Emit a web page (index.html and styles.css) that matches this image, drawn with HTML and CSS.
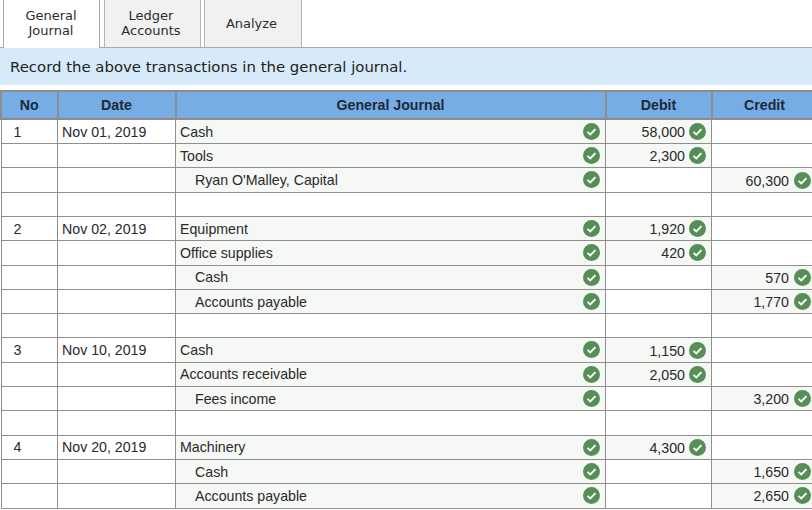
FILE: index.html
```html
<!DOCTYPE html>
<html lang="en">
<head>
<meta charset="utf-8">
<title>General Journal</title>
<link rel="stylesheet" href="styles.css">
</head>
<body>
<svg class="defs" width="0" height="0" aria-hidden="true"><symbol id="ok" viewBox="0 0 18 18"><circle cx="9" cy="9" r="9" fill="#568f56"/><path d="M4.8 9.4l2.9 2.6 5.5-5.6" fill="none" stroke="#fff" stroke-width="2"/></symbol></svg>
<nav class="tabs">
  <div class="tab active">General<br>Journal</div>
  <div class="tab">Ledger<br>Accounts</div>
  <div class="tab">Analyze</div>
</nav>
<p class="prompt">Record the above transactions in the general journal.</p>
<table class="journal">
  <colgroup><col class="c-no"><col class="c-date"><col class="c-acct"><col class="c-num"><col class="c-num2"></colgroup>
  <thead><tr><th>No</th><th>Date</th><th>General Journal</th><th>Debit</th><th>Credit</th></tr></thead>
  <tbody>
    <tr class="filled"><td class="no">1</td><td>Nov 01, 2019</td><td class="acct">Cash<svg class="ok"><use href="#ok"/></svg></td><td class="num">58,000<svg class="ok"><use href="#ok"/></svg></td><td></td></tr>
    <tr class="filled"><td></td><td></td><td class="acct">Tools<svg class="ok"><use href="#ok"/></svg></td><td class="num">2,300<svg class="ok"><use href="#ok"/></svg></td><td></td></tr>
    <tr class="filled cr"><td></td><td></td><td class="acct sub">Ryan O'Malley, Capital<svg class="ok"><use href="#ok"/></svg></td><td></td><td class="num">60,300<svg class="ok"><use href="#ok"/></svg></td></tr>
    <tr><td></td><td></td><td></td><td></td><td></td></tr>
    <tr class="filled"><td class="no">2</td><td>Nov 02, 2019</td><td class="acct">Equipment<svg class="ok"><use href="#ok"/></svg></td><td class="num">1,920<svg class="ok"><use href="#ok"/></svg></td><td></td></tr>
    <tr class="filled"><td></td><td></td><td class="acct">Office supplies<svg class="ok"><use href="#ok"/></svg></td><td class="num">420<svg class="ok"><use href="#ok"/></svg></td><td></td></tr>
    <tr class="filled cr"><td></td><td></td><td class="acct sub">Cash<svg class="ok"><use href="#ok"/></svg></td><td></td><td class="num">570<svg class="ok"><use href="#ok"/></svg></td></tr>
    <tr class="filled cr"><td></td><td></td><td class="acct sub">Accounts payable<svg class="ok"><use href="#ok"/></svg></td><td></td><td class="num">1,770<svg class="ok"><use href="#ok"/></svg></td></tr>
    <tr><td></td><td></td><td></td><td></td><td></td></tr>
    <tr class="filled"><td class="no">3</td><td>Nov 10, 2019</td><td class="acct">Cash<svg class="ok"><use href="#ok"/></svg></td><td class="num">1,150<svg class="ok"><use href="#ok"/></svg></td><td></td></tr>
    <tr class="filled"><td></td><td></td><td class="acct">Accounts receivable<svg class="ok"><use href="#ok"/></svg></td><td class="num">2,050<svg class="ok"><use href="#ok"/></svg></td><td></td></tr>
    <tr class="filled cr"><td></td><td></td><td class="acct sub">Fees income<svg class="ok"><use href="#ok"/></svg></td><td></td><td class="num">3,200<svg class="ok"><use href="#ok"/></svg></td></tr>
    <tr><td></td><td></td><td></td><td></td><td></td></tr>
    <tr class="filled"><td class="no">4</td><td>Nov 20, 2019</td><td class="acct">Machinery<svg class="ok"><use href="#ok"/></svg></td><td class="num">4,300<svg class="ok"><use href="#ok"/></svg></td><td></td></tr>
    <tr class="filled cr"><td></td><td></td><td class="acct sub">Cash<svg class="ok"><use href="#ok"/></svg></td><td></td><td class="num">1,650<svg class="ok"><use href="#ok"/></svg></td></tr>
    <tr class="filled cr"><td></td><td></td><td class="acct sub">Accounts payable<svg class="ok"><use href="#ok"/></svg></td><td></td><td class="num">2,650<svg class="ok"><use href="#ok"/></svg></td></tr>
  </tbody>
</table>
</body>
</html>
```
FILE: styles.css
```css
html, body { margin: 0; padding: 0; background: #fff; }
body { width: 812px; height: 510px; overflow: hidden; color: #222; font-family: "Liberation Sans", Arial, sans-serif; }
.defs { position: absolute; }
.tabs { display: flex; gap: 3px; height: 47px; padding-left: 3px; border-bottom: 1px solid #a9a9a9; font-family: "DejaVu Sans", Verdana, sans-serif; font-size: 13px; line-height: 15px; color: #2b2b2b; }
.tab { box-sizing: border-box; width: 97px; height: 47px; padding: 0 3px 2px 0; display: flex; align-items: center; justify-content: center; text-align: center; background: #f1f1f1; border: 1px solid #b4b4b4; border-top: 0; border-bottom: 0; }
.tab:last-child { width: 98px; padding-bottom: 0; }
.tab.active { width: 97px; height: 48px; margin-right: 1px; padding-right: 1px; background: #fff; position: relative; z-index: 1; border-color: #a9a9a9; }
.prompt { margin: 0; height: 37px; padding-left: 10px; display: flex; align-items: center; background: #d7eaf9; font-family: "DejaVu Sans", Verdana, sans-serif; font-size: 14.9px; color: #222; }
.journal { margin-top: 5.3px; width: 816.5px; table-layout: fixed; border-collapse: collapse; font-size: 14.2px; }
.c-no { width: 56.5px; } .c-date { width: 118px; } .c-acct { width: 430px; } .c-num { width: 106px; } .c-num2 { width: 106px; }
.journal th, .journal td { border: 2px solid #8c8c8c; padding: 0; }
.journal th { height: 26px; background: #78ace4; font-weight: bold; color: #1c2a3a; text-align: center; }
.journal td { box-sizing: border-box; height: 24.3px; padding: 0 4px; border-width: 1px; border-color: #8f8f8f; white-space: nowrap; overflow: hidden; color: #2a2a2a; }
.journal td:first-child { padding-left: 12px; }
.filled .acct { background: #f5f8f4; position: relative; }
.filled .num { background: #f5f8f4; text-align: right; padding-right: 5px; }
.acct.sub { padding-left: 19px; }
.ok { width: 17px; height: 17px; vertical-align: -3.5px; }
.acct .ok { position: absolute; right: 5px; top: 3px; }
.num .ok { margin-left: 4px; }
.cr .num { padding-right: 6px; }
.cr .num .ok { margin-left: 5px; }
```
